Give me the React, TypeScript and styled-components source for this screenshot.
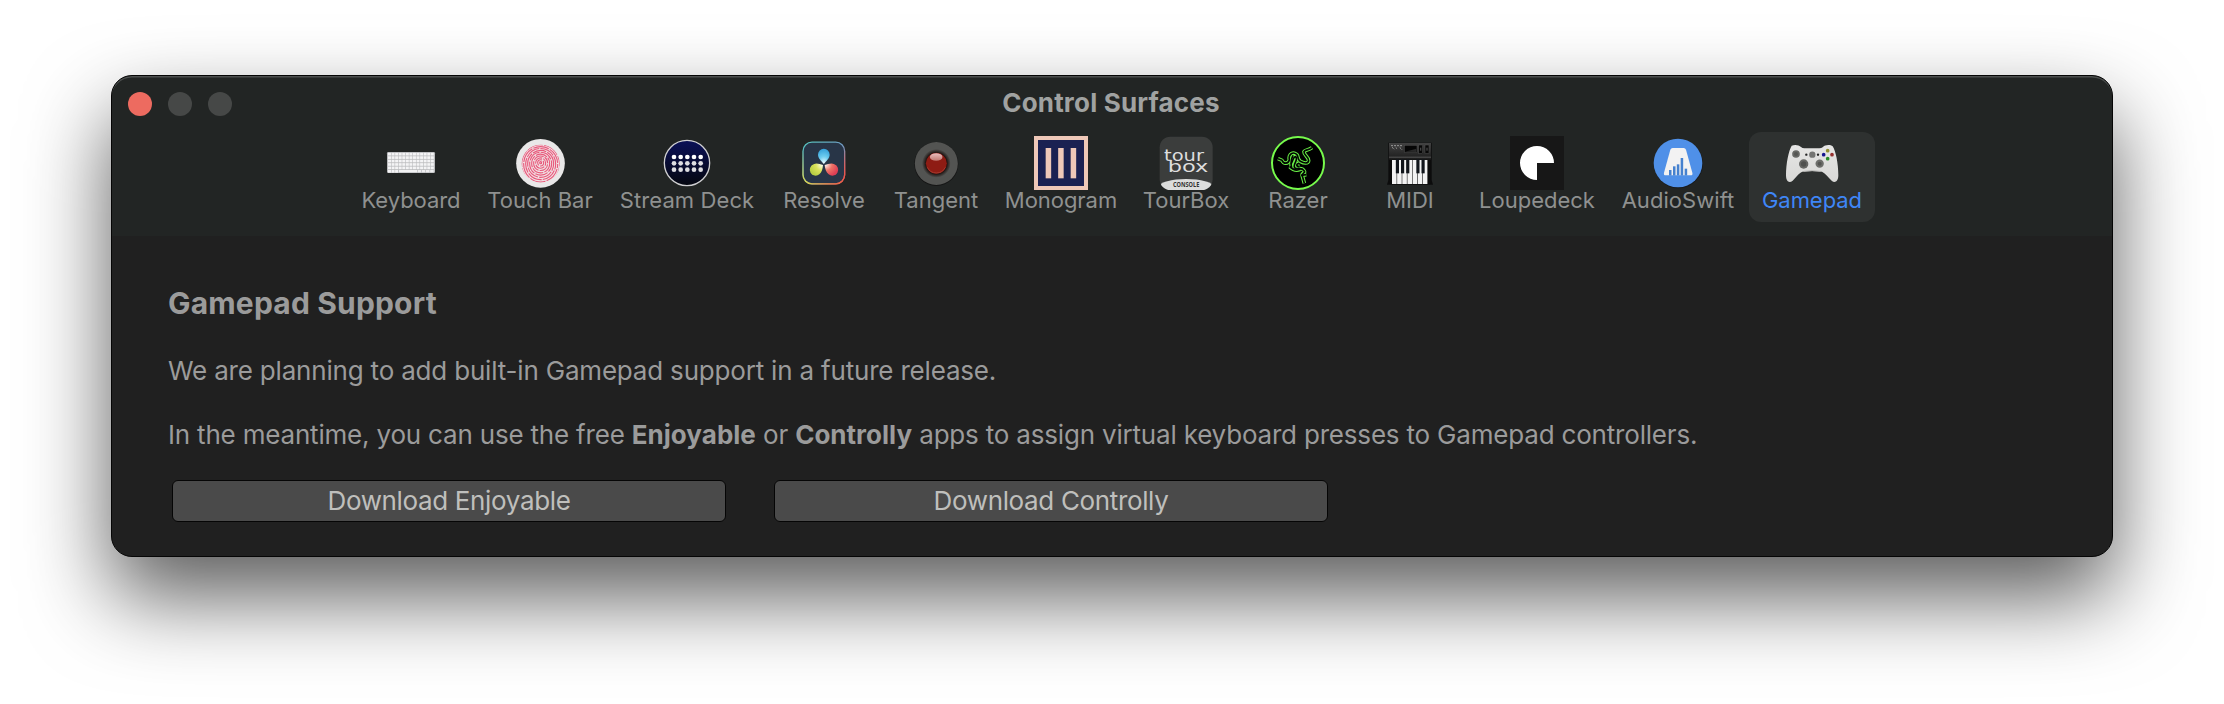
import React from 'react';
import styled, { createGlobalStyle } from 'styled-components';

const GlobalStyle = createGlobalStyle`
  * { box-sizing: border-box; }
  html, body { margin: 0; background: #fff; }
  body { font-family: Inter, "Liberation Sans", sans-serif; overflow: hidden; }
`;

const Desktop = styled.main`
  width: 2224px;
  height: 704px;
  padding: 75px 111px;
  background: #fff;
`;

const Window = styled.section`
  display: flex;
  flex-direction: column;
  width: 2002px;
  height: 482px;
  border: 1px solid #050505;
  border-radius: 21px;
  overflow: hidden;
  background: #202020;
  box-shadow: 0 40px 84px rgba(0, 0, 0, 0.64);
`;

const Header = styled.header`
  height: 160px;
  background: #222524;
  box-shadow: inset 0 2px 0 -0.5px #4c4f4e;
  border-radius: 20px 20px 0 0;
`;

const TitleBar = styled.div`
  display: grid;
  grid-template-columns: 1fr auto 1fr;
  align-items: center;
  height: 56px;
  padding: 0 16px;
`;

const Lights = styled.div`
  display: flex;
  gap: 16px;
`;

const Light = styled.span<{ $color: string }>`
  width: 24px;
  height: 24px;
  border-radius: 50%;
  background: ${(p) => p.$color};
`;

const Title = styled.h1`
  margin: 0 2px 2px 0;
  font-size: 26px;
  line-height: 32px;
  font-weight: 700;
  letter-spacing: 0.18px;
  color: #a0a2a1;
`;

const Toolbar = styled.nav`
  display: flex;
  padding-left: 236px;
`;

const Tool = styled.button<{ $width: number; $active?: boolean }>`
  display: flex;
  flex: none;
  flex-direction: column;
  align-items: center;
  width: ${(p) => p.$width}px;
  height: 90px;
  margin: 0 ${(p) => (p.$active ? 1 : 0)}px;
  padding: 4px 0 0;
  border: 0;
  border-radius: 12px;
  background: ${(p) => (p.$active ? '#2e3130' : 'transparent')};
  color: ${(p) => (p.$active ? '#3f86f7' : '#8f9190')};
  font-family: inherit;
`;

const ToolLabel = styled.span<{ $spacing: number }>`
  font-size: 22px;
  line-height: 26px;
  margin-top: -3px;
  white-space: nowrap;
  letter-spacing: ${(p) => p.$spacing}px;
`;

const Glyph = styled.svg`
  display: block;
  flex: none;
  width: 54px;
  height: 54px;
  overflow: visible;
`;

const Content = styled.div`
  flex: 1;
  padding: 47px 56px 0;
  color: #9b9b9b;
`;

const Heading = styled.h2`
  margin: 0;
  font-size: 30px;
  line-height: 40px;
  font-weight: 700;
  letter-spacing: 0.18px;
`;

const Paragraph = styled.p<{ $top: number }>`
  margin: ${(p) => p.$top}px 0 0;
  font-size: 26px;
  line-height: 32px;
  white-space: nowrap;
  letter-spacing: -0.19px;

  b {
    letter-spacing: 0.02px;
  }
`;

const Actions = styled.div`
  display: flex;
  gap: 49px;
  margin: 29px 0 0 4px;
`;

const ActionButton = styled.button`
  width: 554px;
  height: 42px;
  padding: 0;
  border: 1px solid #050505;
  border-radius: 6px;
  background: #4a4a4a;
  color: #bfbfbc;
  font-family: inherit;
  font-size: 26px;
  line-height: 40px;
  letter-spacing: -0.35px;

  & + & {
    margin-left: -1px;
  }
`;

const Icon = ({ children }: { children: React.ReactNode }) => (
  <Glyph viewBox="0 0 162 162" aria-hidden="true">{children}</Glyph>
);

const KeyboardIcon = () => (
  <Icon>
    <rect x="9" y="48" width="144" height="63" rx="4" fill="#b9babc" />
    {[0, 1, 2, 3, 4, 5].map((row) =>
      Array.from({ length: row === 5 ? 8 : 13 }, (_, i) => {
        if (row === 5 && i === 3) return <rect key="space" x="45" y="102" width="54" height="7" fill="#f1f1f2" />;
        if (row === 5 && i > 3) return <rect key={i} x={101 + (i - 4) * 12.5} y="102" width="10.5" height="7" fill="#eeeeef" />;
        return <rect key={`${row}-${i}`} x={12 + i * 10.7} y={50.5 + row * 10.3} width="9" height="8" fill="#f4f4f5" />;
      }),
    )}
  </Icon>
);

const TouchBarIcon = () => (
  <Icon>
    <defs>
      <clipPath id="print"><circle cx="83" cy="83" r="57" /></clipPath>
    </defs>
    <circle cx="82.5" cy="82" r="73" fill="#e9e8e8" />
    <g clipPath="url(#print)" fill="none" stroke="#e8587b" strokeWidth="3.3">
      <circle cx="83" cy="83" r="58" fill="#f1dfe2" stroke="none" />
      {[3, 9, 15, 21, 27, 33, 39, 45, 51, 57, 63].map((r, i) => (
        <ellipse
          key={r}
          cx="83"
          cy={80 + i * 0.6}
          rx={r}
          ry={r * 1.04}
          strokeDasharray={`${24 + i * 3} 3.5`}
          strokeDashoffset={i * 11}
        />
      ))}
    </g>
  </Icon>
);

const StreamDeckIcon = () => (
  <Icon>
    <defs>
      <linearGradient id="deck" x1="0" y1="0" x2="0" y2="1">
        <stop offset="0" stopColor="#0b1158" />
        <stop offset="1" stopColor="#05070f" />
      </linearGradient>
    </defs>
    <circle cx="81" cy="81" r="68" fill="url(#deck)" stroke="#cfcfd1" strokeWidth="4" />
    {[63, 82, 101].map((y) => [42, 62, 82, 102, 122].map((x) => (
      <circle key={`${x}-${y}`} cx={x} cy={y} r="7" fill={y === 63 ? '#fff' : '#dedee2'} />
    )))}
  </Icon>
);

const ResolveIcon = () => (
  <Icon>
    <defs>
      <linearGradient id="rim" x1="0" y1="0" x2="1" y2="1">
        <stop offset="0" stopColor="#55c4bd" /><stop offset="0.5" stopColor="#6f9cc4" /><stop offset="1" stopColor="#ee4c4c" />
      </linearGradient>
      <linearGradient id="rimLow" x1="0" y1="0" x2="1" y2="0">
        <stop offset="0" stopColor="#d9e04a" /><stop offset="1" stopColor="#ee5548" />
      </linearGradient>
      <linearGradient id="rimHigh" x1="0" y1="0" x2="0" y2="1">
        <stop offset="0.25" stopColor="#fff" stopOpacity="0" /><stop offset="0.85" stopColor="#fff" />
      </linearGradient>
      <mask id="low"><rect width="162" height="162" fill="url(#rimHigh)" /></mask>
      <radialGradient id="blue" cx="0.5" cy="0.95" r="0.9"><stop offset="0" stopColor="#f2fbff" /><stop offset="0.5" stopColor="#6dcdf0" /><stop offset="1" stopColor="#3aa5dc" /></radialGradient>
      <radialGradient id="lime" cx="0.95" cy="0.1" r="1"><stop offset="0" stopColor="#fdfff0" /><stop offset="0.5" stopColor="#dbe35c" /><stop offset="1" stopColor="#b9cf45" /></radialGradient>
      <radialGradient id="coral" cx="0.05" cy="0.1" r="1"><stop offset="0" stopColor="#fff3ee" /><stop offset="0.5" stopColor="#ee7266" /><stop offset="1" stopColor="#dd3e55" /></radialGradient>
    </defs>
    <rect x="18" y="18.5" width="125" height="125" rx="27" fill="#283547" stroke="url(#rim)" strokeWidth="4" />
    <rect x="18" y="18.5" width="125" height="125" rx="27" fill="none" stroke="url(#rimLow)" strokeWidth="4" mask="url(#low)" />
    <path d="M80.500 84C73 75 63 66 63 56a17.500 17.500 0 0 1 35 0c0 10-10 19-17.500 28Z" fill="url(#blue)" />
    <path d="M78 87c-1 11-3 22-11 28a17.500 17.500 0 1 1-17-30c9-5 18 0 28 2Z" fill="url(#lime)" />
    <path d="M83 87c1 11 4 22 12 28a17.500 17.500 0 1 0 17-30c-9-5-19 0-29 2Z" fill="url(#coral)" />
  </Icon>
);

const TangentIcon = () => (
  <Icon>
    <defs>
      <radialGradient id="well"><stop offset="0.7" stopColor="#160b09" /><stop offset="1" stopColor="#160b09" stopOpacity="0" /></radialGradient>
      <linearGradient id="shine" x1="0" y1="0" x2="0" y2="1"><stop offset="0" stopColor="#eabfc0" /><stop offset="1" stopColor="#c0766f" /></linearGradient>
    </defs>
    <circle cx="82" cy="84" r="66" fill="#151515" />
    <circle cx="82" cy="82.500" r="64.500" fill="#535452" />
    <circle cx="82" cy="82" r="43" fill="url(#well)" />
    <circle cx="82" cy="82" r="31.500" fill="#8e1c14" />
    <path d="M55 94a30 30 0 0 0 54 0" fill="none" stroke="#a83a2e" strokeWidth="3" />
    <ellipse cx="81.500" cy="63" rx="19" ry="11.500" fill="url(#shine)" />
  </Icon>
);

const MonogramIcon = () => (
  <Icon>
    <rect width="162" height="162" fill="#efc8b8" />
    <rect x="12" y="12" width="138" height="138" fill="#1b2152" />
    {[35, 72.5, 110].map((x) => <rect key={x} x={x} y="36" width="16.500" height="91" fill="#efc8b8" />)}
  </Icon>
);

const TourBoxIcon = () => (
  <Icon>
    <defs>
      <clipPath id="tile"><rect x="2" y="2" width="159" height="160" rx="32" /></clipPath>
    </defs>
    <g clipPath="url(#tile)">
      <rect width="162" height="162" fill="#3b3d3c" />
      <ellipse cx="81.500" cy="151" rx="80" ry="22" fill="#dcdddc" />
    </g>
    <g fill="#dedede" fontFamily="DejaVu Sans" fontSize="49">
      <text x="15" y="74" textLength="120" lengthAdjust="spacingAndGlyphs">tour</text>
      <text x="26" y="109" textLength="122" lengthAdjust="spacingAndGlyphs">box</text>
    </g>
    <text x="42" y="153" fill="#333" fontFamily="Open Sans" fontSize="19" fontWeight="700" textLength="79" lengthAdjust="spacingAndGlyphs">CONSOLE</text>
  </Icon>
);

const snakes = [
  'M21 68 L33 73 C38 85 52 84 55 72 C52 54 66 46 77 55 C84 62 77 68 88 76 C98 82 112 84 113 74 C113 62 98 58 99 47 C103 40 112 44 123 35',
  'M60 84 C70 66 66 62 74 62 C84 72 62 88 72 96 C80 102 92 92 99 104 C106 112 90 110 94 120 L100 142',
  'M56 92 C66 102 78 104 88 100 M66 58 C60 70 58 80 62 96 M84 82 C74 84 76 92 86 92 M90 118 L106 116',
];

const RazerIcon = () => (
  <Icon>
    <circle cx="81" cy="81" r="78" fill="#000" stroke="#77fb4c" strokeWidth="6" />
    <g fill="none" strokeLinejoin="round">
      {snakes.map((d) => <path key={d} d={d} stroke="#68ef46" strokeWidth="11" />)}
      {snakes.map((d) => <path key={d} d={d} stroke="#020602" strokeWidth="5" />)}
    </g>
  </Icon>
);

const MidiIcon = () => (
  <Icon>
    <defs><linearGradient id="synth" x1="0" y1="0" x2="0" y2="1"><stop offset="0" stopColor="#424242" /><stop offset="1" stopColor="#1b1b1b" /></linearGradient></defs>
    <path d="M16 20h130v112l4 14H12l4-14Z" fill="#0c0c0c" />
    <rect x="18" y="21" width="126" height="50" fill="url(#synth)" />
    <rect x="18" y="62" width="126" height="3" fill="#555" />
    <path d="M24 29h34M27 34l8 6M38 34l6 6M50 34l8 8" stroke="#9b9b9b" strokeWidth="3" strokeDasharray="6 3" />
    <rect x="64" y="28" width="38" height="22" fill="#050505" stroke="#525252" strokeWidth="1.500" />
    <path d="M66 47L100 38v10Z" fill="#292929" />
    {[107, 126].map((x) => <rect key={x} x={x} y="27" width="12" height="26" fill="#070707" stroke="#555" strokeWidth="1.500" />)}
    <rect x="111" y="35" width="4" height="9" fill="#444" /><rect x="130" y="35" width="4" height="9" fill="#444" />
    {Array.from({ length: 7 }, (_, i) => <rect key={i} x={27 + i * 15.4} y="72" width="13.800" height="72" fill="#f3f3f3" />)}
    {[43.5, 59, 74.5, 105, 120.5].map((x) => <rect key={x} x={x - 5} y="70" width="9.500" height="42" fill="#11151b" />)}
  </Icon>
);

const LoupedeckIcon = () => (
  <Icon>
    <rect width="162" height="162" fill="#171717" />
    <path d="M81 81h51A51 51 0 1 0 81 132Z" fill="#fff" />
  </Icon>
);

const AudioSwiftIcon = () => (
  <Icon>
    <circle cx="82" cy="83" r="74" fill="#181b1f" />
    <circle cx="81" cy="81" r="73" fill="#4f90e8" />
    <path d="M65 36h33q5 0 7 5l19 69q2 8-5 8H44q-7 0-5-8L58 41q2-5 7-5Z" fill="#f2f2f2" />
    {[[54, 102], [66, 91], [77.5, 85], [89, 66], [101, 98]].map(([x, y]) => (
      <rect key={x} x={x} y={y} width="7.500" height={118.5 - y} fill="#4581cf" />
    ))}
  </Icon>
);

const GamepadIcon = () => (
  <Icon>
    <defs><linearGradient id="shell" x1="0" y1="0" x2="0" y2="1"><stop offset="0" stopColor="#e6e6e5" /><stop offset="1" stopColor="#d8d8d6" /></linearGradient></defs>
    <path d="M20 29C28 25 42 26 48 33Q52 37 58 37H103Q109 37 114 33C120 26 136 25 143 31C152 44 160 82 160 118C160 137 149 143 140 134C130 124 122 112 111 107Q81 103 52 107C40 112 33 125 23 134C13 143 3 137 3 118C3 82 11 44 20 29Z" fill="url(#shell)" />
    <path d="M56 106Q81 102 107 106" fill="none" stroke="#b7b7b5" strokeWidth="3" />
    <circle cx="33" cy="54" r="11.500" fill="#666764" /><circle cx="33" cy="54" r="6" fill="#555653" />
    <circle cx="56" cy="84" r="14" fill="#666764" /><circle cx="56" cy="84" r="8" fill="#50514f" />
    <circle cx="104" cy="83" r="12.500" fill="#6d6e6b" /><circle cx="104" cy="83" r="6" fill="#545552" />
    <circle cx="82" cy="56" r="9.500" fill="#747573" />
    <circle cx="64" cy="56" r="3.500" fill="#252525" /><circle cx="99" cy="56" r="3.500" fill="#252525" />
    <circle cx="128" cy="44" r="5.500" fill="#918f32" /><circle cx="116" cy="56" r="5.500" fill="#15158f" />
    <circle cx="141" cy="56" r="5.500" fill="#963230" /><circle cx="128" cy="68" r="5.500" fill="#288c29" />
  </Icon>
);

const tools = [
  { label: 'Keyboard', width: 126, spacing: -0.05, Art: KeyboardIcon },
  { label: 'Touch Bar', width: 132, spacing: 0, Art: TouchBarIcon },
  { label: 'Stream Deck', width: 162, spacing: 0.1, Art: StreamDeckIcon },
  { label: 'Resolve', width: 112, spacing: 0, Art: ResolveIcon },
  { label: 'Tangent', width: 112, spacing: 0, Art: TangentIcon },
  { label: 'Monogram', width: 138, spacing: -0.05, Art: MonogramIcon },
  { label: 'TourBox', width: 112, spacing: 0, Art: TourBoxIcon },
  { label: 'Razer', width: 112, spacing: 0, Art: RazerIcon },
  { label: 'MIDI', width: 112, spacing: 0, Art: MidiIcon },
  { label: 'Loupedeck', width: 142, spacing: 0, Art: LoupedeckIcon },
  { label: 'AudioSwift', width: 140, spacing: 0.05, Art: AudioSwiftIcon },
  { label: 'Gamepad', width: 126, spacing: -0.05, Art: GamepadIcon },
];

export default function App() {
  return (
    <>
      <GlobalStyle />
      <Desktop>
        <Window>
          <Header>
            <TitleBar>
              <Lights>
                <Light $color="#ed6b60" />
                <Light $color="#464847" />
                <Light $color="#464847" />
              </Lights>
              <Title>Control Surfaces</Title>
            </TitleBar>
            <Toolbar>
              {tools.map(({ label, width, spacing, Art }) => (
                <Tool key={label} $width={width} $active={label === 'Gamepad'}>
                  <Art />
                  <ToolLabel $spacing={spacing}>{label}</ToolLabel>
                </Tool>
              ))}
            </Toolbar>
          </Header>
          <Content>
            <Heading>Gamepad Support</Heading>
            <Paragraph $top={32}>We are planning to add built-in Gamepad support in a future release.</Paragraph>
            <Paragraph $top={32}>
              In the meantime, you can use the free <b>Enjoyable</b> or <b>Controlly</b> apps to assign virtual keyboard presses to Gamepad controllers.
            </Paragraph>
            <Actions>
              <ActionButton>Download Enjoyable</ActionButton>
              <ActionButton>Download Controlly</ActionButton>
            </Actions>
          </Content>
        </Window>
      </Desktop>
    </>
  );
}
